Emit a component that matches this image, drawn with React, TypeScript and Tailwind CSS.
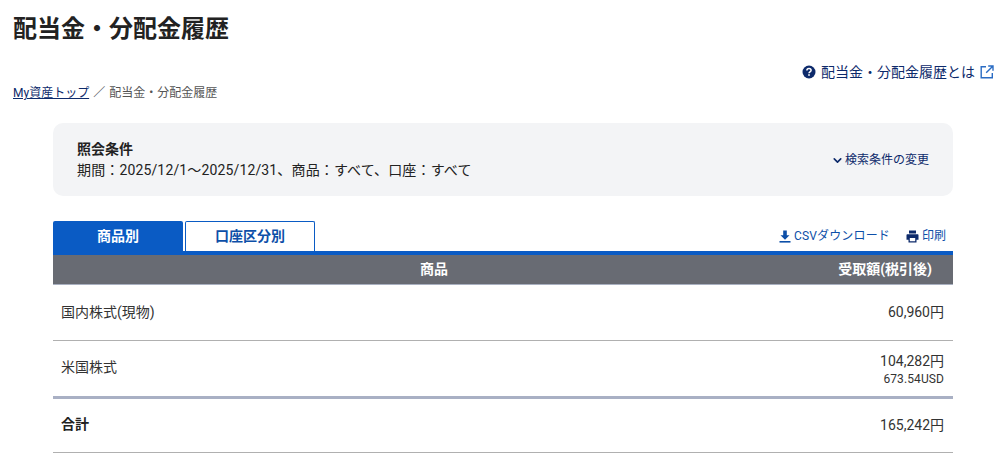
import { ChevronDown } from 'lucide-react'

const fontStack = 'font-["Roboto","Noto_Sans_CJK_JP",sans-serif] [text-spacing-trim:space-all]'

function HelpIcon() {
  return (
    <svg viewBox="0 0 14 14" className="w-[14px] h-[14px]">
      <circle cx="7" cy="7" r="6.5" fill="#0d2a6b" />
      <path d="M4.9 5.4c0-1.2 1-1.9 2.1-1.9 1.2 0 2.1.7 2.1 1.8 0 1.6-2.1 1.6-2.1 3" fill="none" stroke="#fff" strokeWidth="1.5" />
      <rect x="6.2" y="9.2" width="1.6" height="1.6" fill="#fff" />
    </svg>
  )
}

function ExternalIcon() {
  return (
    <svg viewBox="0 0 14 14" className="w-[14px] h-[14px]" fill="none" stroke="#2a6cc4" strokeWidth="1.4">
      <path d="M6 1.700H1.200v11.100h11.100V8" />
      <path d="M8.200 1h4.800v4.800M13 1 6.200 7.800" />
    </svg>
  )
}

function DownloadIcon() {
  return (
    <svg viewBox="0 0 12 13" className="w-[12px] h-[13px]" fill="#0d4fa8">
      <path d="M4.200 0.500h3.600v4.700h2.700L6 9.700 1.500 5.200h2.700z" />
      <rect x="0.500" y="11" width="11" height="1.600" />
    </svg>
  )
}

function PrintIcon() {
  return (
    <svg viewBox="0 0 13 13" className="w-[13px] h-[13px]" fill="#0d2a6b">
      <path fillRule="evenodd" d="M3 .5h7v3H3zM1.500 4.200h10c.6 0 1 .4 1 1v4.600H10.500v2.700h-8V9.800H.5V5.200c0-.6.4-1 1-1zM3.800 8v3.300h5.400V8z" />
    </svg>
  )
}

export default function App() {
  return (
    <div className={`${fontStack} w-[1000px] h-[462px] overflow-hidden bg-white text-[#333]`}>
      {/* Page head */}
      <div className="pl-[13px] pr-[6px] pt-[13px]">
        <h1 className="text-[24px] leading-[32px] font-bold text-[#222]">配当金・分配金履歴</h1>
        <div className="flex justify-between items-start mt-[17px]">
          <div className="mt-[22px] text-[12px] leading-[18px] text-[#555]">
            <a className="text-[#0d2a6b] underline">My資産トップ</a>
            <span className="mx-[4px]">／</span>
            配当金・分配金履歴
          </div>
          <a className="flex items-center gap-[5px] text-[14px] leading-[20px] text-[#0d2a6b]">
            <HelpIcon />
            配当金・分配金履歴とは
            <ExternalIcon />
          </a>
        </div>
      </div>

      <div className="ml-[53px] w-[900px] mt-[21px]">
        {/* Search conditions */}
        <div className="h-[73px] bg-[#f3f4f6] rounded-[10px] px-[24px] flex items-center justify-between">
          <div>
            <div className="text-[14px] leading-[20px] font-bold text-[#222]">照会条件</div>
            <div className="text-[14px] leading-[22px] tracking-[0.14px] text-[#222]">
              期間：2025/12/1〜2025/12/31、商品：すべて、口座：すべて
            </div>
          </div>
          <a className="flex items-center gap-[1px] pt-[1px] text-[12px] text-[#0d2a6b]">
            <ChevronDown className="w-[13px] h-[13px] stroke-[3]" />
            検索条件の変更
          </a>
        </div>

        {/* Tabs */}
        <div className="flex items-end justify-between mt-[25px] h-[30px]">
          <div className="flex gap-[2px]">
            <div className="w-[130px] h-[30px] bg-[#0a5bc4] rounded-t-[2px] flex items-center justify-center text-[14px] font-bold text-white">
              商品別
            </div>
            <div className="w-[130px] h-[30px] border border-b-0 border-[#0a5bc4] rounded-t-[2px] flex items-center justify-center text-[14px] font-bold text-[#0d4fa8]">
              口座区分別
            </div>
          </div>
          <div className="flex items-center gap-[16px] pr-[7px] pb-[7px] text-[12px] leading-[16px] text-[#0d4fa8]">
            <a className="flex items-center gap-[3px] tracking-[0.15px]">
              <DownloadIcon />
              CSVダウンロード
            </a>
            <a className="flex items-center gap-[3px]">
              <PrintIcon />
              印刷
            </a>
          </div>
        </div>

        {/* Table */}
        <div className="border-t-[4px] border-[#0a5bc4]">
          <div className="h-[30px] bg-[#686b73] border-b border-[#a9b0c0] flex items-center text-[14px] font-bold text-white">
            <div className="flex-1 pl-[367px]">商品</div>
            <div className="pr-[21px]">受取額(税引後)</div>
          </div>
          <div className="h-[56px] border-b border-[#b0b0b0] flex items-center justify-between pl-[8px] pr-[9px] text-[14px]">
            <div>国内株式(現物)</div>
            <div>60,960円</div>
          </div>
          <div className="h-[58px] border-b-[3px] border-[#a9b0c4] flex items-center justify-between pl-[8px] pr-[9px] text-[14px]">
            <div className="pb-[2px]">米国株式</div>
            <div className="text-right pt-[2px]">
              <div className="leading-[18px]">104,282円</div>
              <div className="text-[12px] leading-[18px] tracking-[0.1px]">673.54USD</div>
            </div>
          </div>
          <div className="h-[54px] border-b border-[#b0b0b0] flex items-center justify-between pl-[8px] pr-[9px] text-[14px]">
            <div className="font-bold text-[#222] pb-[2px]">合計</div>
            <div>165,242円</div>
          </div>
        </div>
      </div>
    </div>
  )
}
